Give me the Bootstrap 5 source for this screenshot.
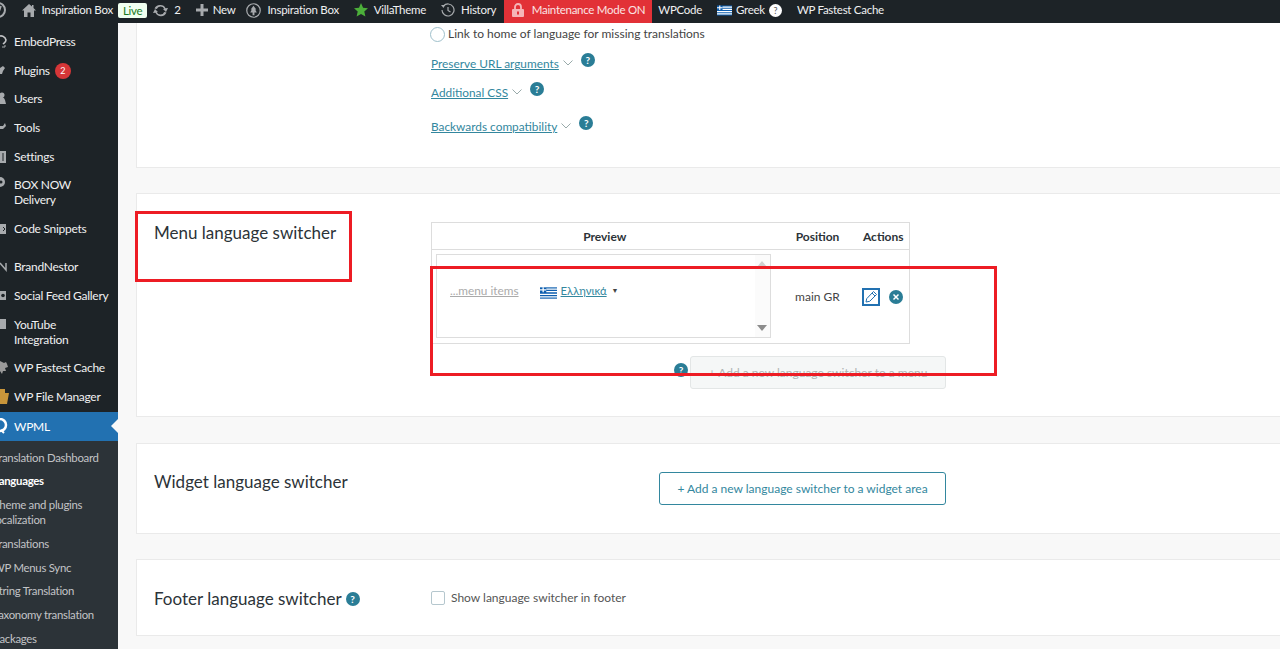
<!DOCTYPE html>
<html lang="en"><head><meta charset="utf-8"><title>WPML Languages</title>
<link href="https://cdn.jsdelivr.net/npm/bootstrap@5.3.0/dist/css/bootstrap.min.css" rel="stylesheet">
<style>
html,body{height:649px;overflow:hidden}
body{font-family:"Lato","Open Sans","Liberation Sans",sans-serif;font-size:12px;color:#444;background:#f8f8f8;position:relative}
.topbar{height:23px;background:#1d2327;color:#f0f0f1;font-size:11.5px;letter-spacing:-.28px;line-height:20px;overflow:hidden;white-space:nowrap}
.ab-item{padding:0 7.5px 3px;gap:6px;height:23px}
.ab-first{margin-left:-10px;padding-left:0}
.ab-red{background:#e23137;color:#fbe4e4;margin-left:0;padding:0 7px 3px 8px;gap:8px}
.ab-live{padding-right:6px}
.ab-upd{padding-left:0}
.ab-new{margin-right:-4px;gap:5px}
.ab-next{padding-left:6px}
.live-tag{background:#f0fff0;color:#1a7a22;border-radius:2px;height:15px;line-height:15px;padding:0 5px;font-size:11.5px;margin-left:-1px}
.shell{height:626px}
.sidebar{width:118px;background:#1d2327;color:#f0f0f1;padding-top:11px;overflow:hidden;flex:none;font-size:12px;letter-spacing:-.28px}
.s-item{height:28.7px;line-height:15px;white-space:nowrap;overflow:visible}
.s-item.two{height:43.6px}
.s-gap{height:9.5px}
.s-icon{width:14px;flex:none;height:16px;display:block}
.s-active{background:#2271b1;color:#fff;position:relative;height:29px;margin-top:-6px}
.s-active::after{content:"";position:absolute;right:0;top:7.5px;border:7px solid transparent;border-right-color:#f8f8f8;border-left:0}
.s-sub{background:#2c3338;color:#c3c4c7;padding-top:5px;height:400px;font-size:11.4px}
.s-sub div{height:23.7px;line-height:15px;padding-top:4px;margin-left:-7px;white-space:nowrap}
.s-sub div.two{height:39px;white-space:normal}
.s-sub div.cur{color:#fff;font-weight:700}
.count-pill{background:#d63638;color:#fff;width:16px;height:16px;border-radius:50%;font-size:9px;line-height:16px;text-align:center;margin-left:5px}
.main-area{padding-left:18px;position:relative;min-width:0}
.panel{background:#fff;border:1px solid #eaeaea;border-right:0;padding-left:17px}
.p1{height:145px;border-top:0;margin-bottom:25px}
.p2{height:224px;margin-bottom:26px;padding-top:27px}
.p3{height:91px;margin-bottom:25px;padding-top:26px}
.p4{height:77px;padding-top:27px}
.title-col{width:277px;flex:none;font-size:17px;color:#2c3338;line-height:24px}
.radio-o{width:15px;height:15px;border:1px solid #9fc0cb;border-radius:50%;margin-left:-1px;margin-right:3px}
.radio-row{height:16px;margin-top:3px;line-height:16px;color:#444}
.tlink{color:#33879e;text-decoration:underline;font-size:11.85px;line-height:16px}
.qmark{width:14px;height:14px;border-radius:50%;background:#2a7d96;color:#fff;font-size:10px;line-height:14px;text-align:center;font-weight:700;flex:none}
.lnk-row{height:16px;gap:4px}
.r1{margin-top:14px}.r1 .qmark,.r2 .qmark,.r3 .qmark{margin-left:4px;margin-top:-9px}
.r2{margin-top:13px}.r3{margin-top:18px}
.chev{width:10px;height:6px;display:block;margin-top:-2px}
.lang-tbl{width:479px;border:1px solid #ddd;border-collapse:collapse;margin-top:1px;font-size:12px;color:#444;height:122px;table-layout:fixed}
.lang-tbl th{height:27px;border-bottom:1px solid #ddd;font-weight:700;color:#2c3338;text-align:center;padding:1px 0 0}
.lang-tbl td{padding:0;vertical-align:middle}
.col-prev{width:346px}.col-pos{width:80px}
.prev-box{width:335px;height:84px;border:1px solid #ddd;margin:4px 0 5px 4px;display:flex;padding:28px 0 0 13px;position:relative;gap:21px;font-size:11.8px}
.menu-grey{color:#aaa;text-decoration:underline;line-height:16px}
.gr-link{color:#33879e;text-decoration:underline;line-height:16px;font-size:11.3px}
.caret-mini{font-size:7px;line-height:14px;color:#444;margin-left:1px}
.scroll-strip{position:absolute;right:0;top:0;bottom:0;width:15px;background:#fbfbfb}
.up-arr,.dn-arr{position:absolute;left:2px;border-left:5px solid transparent;border-right:5px solid transparent}
.up-arr{top:6px;border-bottom:6px solid #d0d0d0}
.dn-arr{bottom:6px;border-top:6px solid #8c8c8c}
.edit-box{width:18px;height:18px;border:2px solid #2271b1;display:block}
.close-o{width:14px;height:14px;border-radius:50%;background:#2a7d96;display:block}
.act-cell{gap:9px;padding-right:2px}
.add-row{width:515px;margin-top:12px;gap:2px}
.add-row .qmark{margin-top:-6px}
.add-btn-off{width:256px;height:33px;background:#f5f7f7;border:1px solid #e3e6e6;border-radius:3px;color:#b0b4b4;font-size:12px;line-height:31px;text-align:center;padding:0}
.add-btn-on{width:287px;height:33px;border:1px solid #33879e;border-radius:3px;color:#33879e;font-size:12px;background:#fff;padding:0;margin-left:228px;margin-top:2px}
.foot-title{gap:4px}
.check-o{width:14px;height:14px;border:1px solid #b5c7ce;border-radius:2px;flex:none;margin-right:6px}
.foot-opt{color:#555;font-size:12px;line-height:14px;margin-top:4px}
.q-white{width:13px;height:13px;line-height:13px;font-size:9px;color:#555}
.red-frame{position:absolute;border:3.5px solid #ed1c24;pointer-events:none}
.rf1{left:135px;top:211px;width:217px;height:71px}
.rf2{left:430px;top:266px;width:567px;height:110px}
</style></head>
<body>
<div class="topbar d-flex align-items-start">
 <div class="ab-item ab-first d-flex align-items-center"><svg width="16" height="16" viewBox="0 0 16 16"><circle cx="8" cy="8" r="7" fill="none" stroke="#a7aaad" stroke-width="2"/><path d="M5 4l3 9 3-9" stroke="#a7aaad" fill="none" stroke-width="1.6"/></svg></div>
 <div class="ab-item ab-live d-flex align-items-center ps-2"><svg width="14" height="13" viewBox="0 0 14 13"><path d="M7 0L0 6.500h2V13h3.500V8.500h3V13H12V6.500h2L11.500 4V1H10v1.500z" fill="#a7aaad"/></svg><span>Inspiration Box</span><span class="live-tag">Live</span></div>
 <div class="ab-item ab-upd d-flex align-items-center"><svg width="15" height="13" viewBox="0 0 15 13"><path d="M7.500 1a5.500 5.500 0 0 1 5 3.200L15 4l-2 4-3-3 1.200-.2A4 4 0 0 0 3.800 5L1.500 4.500A6 6 0 0 1 7.500 1zM0 9l2-4 3 3-1.200.2A4 4 0 0 0 11.200 8l2.300.5a6 6 0 0 1-11 .3z" fill="#a7aaad"/></svg><span>2</span></div>
 <div class="ab-item ab-new d-flex align-items-center"><svg width="12" height="12" viewBox="0 0 12 12"><path d="M4.500 0h3v4.500H12v3H7.500V12h-3V7.500H0v-3h4.500z" fill="#a7aaad"/></svg><span>New</span></div>
 <div class="ab-item d-flex align-items-center"><svg width="15" height="15" viewBox="0 0 16 16"><circle cx="8" cy="8" r="7.200" fill="none" stroke="#a7aaad" stroke-width="1.300"/><path d="M8 3l3 4H9.800l1.700 3H9v3H7v-3H4.500l1.700-3H5z" fill="#a7aaad"/></svg><span>Inspiration Box</span></div>
 <div class="ab-item d-flex align-items-center"><svg width="14" height="14" viewBox="0 0 14 14"><path d="M7 0l2.100 4.700 5 .5-3.800 3.300 1.100 5L7 11l-4.400 2.500 1.100-5L0 5.200l5-.5z" fill="#4caf3a"/></svg><span>VillaTheme</span></div>
 <div class="ab-item d-flex align-items-center"><svg width="14" height="14" viewBox="0 0 14 14"><path d="M2.500 3A6 6 0 1 1 1 7" fill="none" stroke="#a7aaad" stroke-width="1.200"/><path d="M0 2l4 0-1.500 3z" fill="#a7aaad"/><path d="M7 4v3.500l2.500 1.500" fill="none" stroke="#a7aaad" stroke-width="1.200"/></svg><span>History</span></div>
 <div class="ab-item ab-red d-flex align-items-center"><svg width="12" height="14" viewBox="0 0 12 14"><path d="M3 6V4a3 3 0 0 1 6 0v2" fill="none" stroke="#f5b6b8" stroke-width="1.800"/><rect y="6" width="12" height="8" rx="1" fill="#f5b6b8"/><rect x="5" y="8.500" width="2" height="3" fill="#e23137"/></svg><span>Maintenance Mode ON</span></div>
 <div class="ab-item ab-next d-flex align-items-center"><span>WPCode</span></div>
 <div class="ab-item d-flex align-items-center gap-1"><svg width="15" height="11" viewBox="0 0 27 18"><rect width="27" height="18" fill="#0d5eaf"/><path d="M10 3h17M10 7h17M0 11h27M0 15h27" stroke="#fff" stroke-width="2"/><path d="M0 4h10M5 0v8" stroke="#fff" stroke-width="2"/></svg><span>Greek</span><span class="d-block rounded-circle bg-white text-center q-white">?</span></div>
 <div class="ab-item d-flex align-items-center"><span>WP Fastest Cache</span></div>
</div>
<div class="shell d-flex">
 <nav class="sidebar">
  <div class="s-item d-flex"><svg class="s-icon" viewBox="0 0 14 16"><path d="M-2 3a5 5 0 0 1 8 3c0 2-2 3-3 4" fill="none" stroke="#c3c4c7" stroke-width="1.600"/><path d="M2 13h3v-2" fill="none" stroke="#a7aaad"/></svg><span>EmbedPress</span></div>
  <div class="s-item d-flex align-items-start"><svg class="s-icon" viewBox="0 0 14 16"><path d="M0 5l3-2 2 2-2 3-1 3H0z" fill="#a7aaad"/></svg><span>Plugins</span><span class="count-pill">2</span></div>
  <div class="s-item d-flex"><svg class="s-icon" viewBox="0 0 14 16"><circle cx="2" cy="4" r="2.500" fill="#a7aaad"/><path d="M-3 13a4 5 0 0 1 8-4l1 4z" fill="#a7aaad"/></svg><span>Users</span></div>
  <div class="s-item d-flex"><svg class="s-icon" viewBox="0 0 14 16"><path d="M0 6h3l2-3 1 3-3 3H0z" fill="#a7aaad"/></svg><span>Tools</span></div>
  <div class="s-item d-flex"><svg class="s-icon" viewBox="0 0 14 16"><path d="M0 2h6v12H0z" fill="#a7aaad"/><path d="M3 4v8" stroke="#1d2327"/></svg><span>Settings</span></div>
  <div class="s-item two d-flex"><svg class="s-icon" viewBox="0 0 14 16"><circle cx="0" cy="5" r="5" fill="#a7aaad"/><circle cx="1" cy="5" r="1.500" fill="#1d2327"/></svg><span>BOX NOW<br>Delivery</span></div>
  <div class="s-item d-flex"><svg class="s-icon" viewBox="0 0 14 16"><path d="M0 3h6v10H0z" fill="#a7aaad"/><path d="M3 6l2 2-2 2" stroke="#1d2327" fill="none"/></svg><span>Code Snippets</span></div>
  <div class="s-gap"></div>
  <div class="s-item d-flex"><svg class="s-icon" viewBox="0 0 14 16"><path d="M0 4l6 7V4" stroke="#a7aaad" fill="none" stroke-width="1.500"/></svg><span>BrandNestor</span></div>
  <div class="s-item d-flex"><svg class="s-icon" viewBox="0 0 14 16"><path d="M0 3h6v9H0z" fill="#a7aaad"/><circle cx="3" cy="7.500" r="1.800" fill="#1d2327"/></svg><span>Social Feed Gallery</span></div>
  <div class="s-item two d-flex"><svg class="s-icon" viewBox="0 0 14 16"><path d="M0 2h6v10H0z" fill="#a7aaad"/></svg><span>YouTube<br>Integration</span></div>
  <div class="s-item d-flex"><svg class="s-icon" viewBox="0 0 14 16"><path d="M0 1l4 2 2-1 1 2 1 3-3 1 1 3-3 0-1 3-2-3z" fill="#9a9a9a"/></svg><span>WP Fastest Cache</span></div>
  <div class="s-item d-flex"><svg class="s-icon" viewBox="0 0 14 16"><path d="M0 0h5v4h4l-2 11H0z" fill="#c8953a"/></svg><span>WP File Manager</span></div>
  <div class="s-item s-active d-flex align-items-center"><svg class="s-icon" viewBox="0 0 14 16"><circle cx="0" cy="7" r="6" fill="none" stroke="#fff" stroke-width="2.500"/><path d="M1 12l3 3" stroke="#fff" stroke-width="2"/></svg><span>WPML</span></div>
  <div class="s-sub">
   <div>Translation Dashboard</div><div class="cur">Languages</div><div class="two">Theme and plugins localization</div><div>Translations</div><div>WP Menus Sync</div><div>String Translation</div><div>Taxonomy translation</div><div>Packages</div>
  </div>
 </nav>
 <main class="main-area flex-grow-1">
  <section class="panel p1 d-flex">
   <div class="title-col"></div>
   <div>
    <div class="radio-row d-flex align-items-center"><span class="radio-o d-block"></span><span>Link to home of language for missing translations</span></div>
    <div class="lnk-row r1 d-flex align-items-center"><a class="tlink" href="#">Preserve URL arguments</a><svg class="chev" viewBox="0 0 10 6"><path d="M.5.500l4.500 4.500 4.500-4.500" fill="none" stroke="#9aa" stroke-width="1"/></svg><span class="qmark">?</span></div>
    <div class="lnk-row r2 d-flex align-items-center"><a class="tlink" href="#">Additional CSS</a><svg class="chev" viewBox="0 0 10 6"><path d="M.5.500l4.500 4.500 4.500-4.500" fill="none" stroke="#9aa" stroke-width="1"/></svg><span class="qmark">?</span></div>
    <div class="lnk-row r3 d-flex align-items-center"><a class="tlink" href="#">Backwards compatibility</a><svg class="chev" viewBox="0 0 10 6"><path d="M.5.500l4.500 4.500 4.500-4.500" fill="none" stroke="#9aa" stroke-width="1"/></svg><span class="qmark">?</span></div>
   </div>
  </section>
  <section class="panel p2 d-flex">
   <div class="title-col">Menu language switcher</div>
   <div>
    <table class="lang-tbl">
     <thead><tr><th class="col-prev">Preview</th><th class="col-pos">Position</th><th>Actions</th></tr></thead>
     <tbody><tr>
      <td><div class="prev-box"><a class="menu-grey" href="#">...menu items</a><span class="d-flex align-items-start gap-1"><svg class="mt-1" width="17" height="12" viewBox="0 0 27 18"><rect width="27" height="18" fill="#0d5eaf"/><path d="M10 3h17M10 7h17M0 11h27M0 15h27" stroke="#fff" stroke-width="2"/><path d="M0 4h10M5 0v8" stroke="#fff" stroke-width="2"/></svg><a class="gr-link" href="#">Ελληνικά</a><span class="caret-mini">▼</span></span><span class="scroll-strip"><span class="up-arr"></span><span class="dn-arr"></span></span></div></td>
      <td class="text-center">main GR</td>
      <td><div class="d-flex align-items-center justify-content-center act-cell"><span class="edit-box"><svg class="d-block" width="14" height="14" viewBox="0 0 14 14"><path d="M2 12l.7-3.300L9.500 1.500l3 3-6.800 6.800zM8 3l3 3" fill="none" stroke="#2271b1"/></svg></span><span class="close-o"><svg class="d-block" width="14" height="14" viewBox="0 0 14 14"><path d="M4.500 4.500l5 5m0-5l-5 5" stroke="#fff" stroke-width="1.500"/></svg></span></div></td>
     </tr></tbody>
    </table>
    <div class="add-row d-flex justify-content-end align-items-center"><span class="qmark">?</span><button class="add-btn-off" type="button">+ Add a new language switcher to a menu</button></div>
   </div>
  </section>
  <section class="panel p3 d-flex">
   <div class="title-col">Widget language switcher</div>
   <div><button class="add-btn-on" type="button">+ Add a new language switcher to a widget area</button></div>
  </section>
  <section class="panel p4 d-flex">
   <div class="title-col d-flex align-items-center foot-title align-self-start"><span>Footer language switcher</span><span class="qmark">?</span></div>
   <div class="d-flex foot-opt"><span class="check-o d-block"></span><span>Show language switcher in footer</span></div>
  </section>
 </main>
</div>
<div class="red-frame rf1"></div>
<div class="red-frame rf2"></div>
</body></html>
